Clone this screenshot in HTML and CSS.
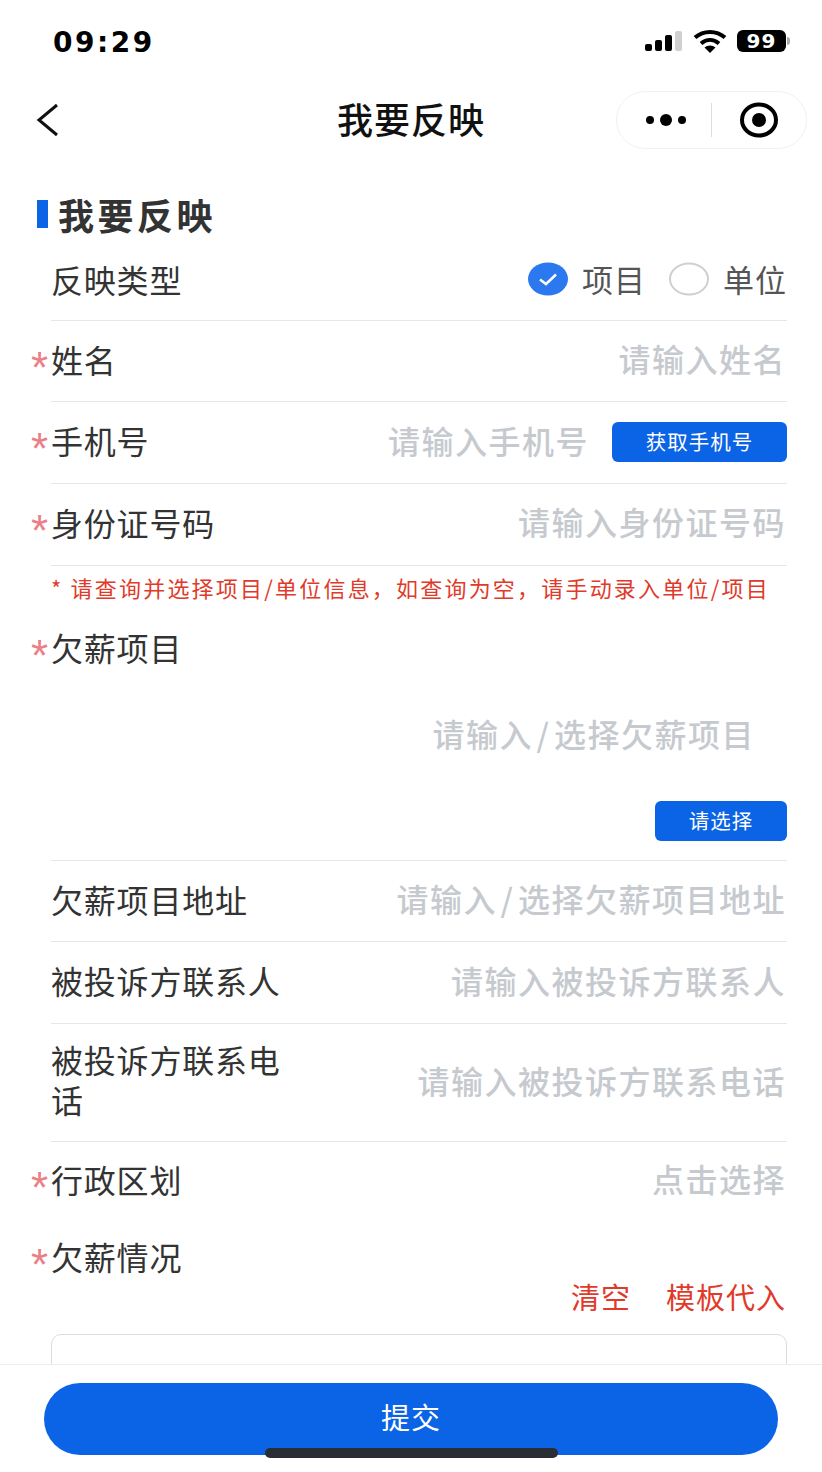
FILE: index.html

```html
<!DOCTYPE html>
<html lang="zh">
<head>
  <meta charset="utf-8">
  <title>我要反映</title>
  <link rel="stylesheet" href="styles.css">
</head>
<body>
<div class="page">
  <div class="status-bar">
    <span class="time">09:29</span>
    <div class="status-icons">
      <svg class="signal" width="38" height="20" viewBox="0 0 38 20">
        <rect x="0" y="13" width="7" height="7" rx="2" fill="#000"/>
        <rect x="10" y="9" width="7" height="11" rx="2" fill="#000"/>
        <rect x="20" y="4" width="7" height="16" rx="2" fill="#000"/>
        <rect x="30" y="0" width="7" height="20" rx="2" fill="#d0d0d0"/>
      </svg>
      <svg class="wifi" width="34" height="24" viewBox="0 0 34 24">
        <path d="M2 8.500C10.500 1 23.500 1 32 8.500" fill="none" stroke="#000" stroke-width="4"/>
        <path d="M8 14.500C13.500 9.800 20.500 9.800 26 14.500" fill="none" stroke="#000" stroke-width="4"/>
        <path d="M17 24L11.500 18.500C14.500 15.800 19.500 15.800 22.500 18.500Z" fill="#000"/>
      </svg>
      <div class="battery"><span>99</span></div>
      <span class="battery-nub"></span>
    </div>
  </div>

  <div class="nav-bar">
    <svg class="back" width="24" height="34" viewBox="0 0 24 34">
      <path d="M21 2L3 17L21 32" fill="none" stroke="#111" stroke-width="3"/>
    </svg>
    <div class="nav-title">我要反映</div>
    <div class="capsule">
      <svg width="44" height="16" viewBox="0 0 44 16">
        <circle cx="5" cy="8" r="4" fill="#000"/>
        <circle cx="21" cy="8" r="6" fill="#000"/>
        <circle cx="37" cy="8" r="4" fill="#000"/>
      </svg>
      <span class="capsule-line"></span>
      <svg class="capsule-ring" width="40" height="36" viewBox="0 0 40 36">
        <ellipse cx="20" cy="18" rx="17" ry="15.500" fill="none" stroke="#000" stroke-width="4"/>
        <circle cx="20" cy="18" r="7" fill="#000"/>
      </svg>
    </div>
  </div>

  <h2 class="section-title">我要反映</h2>

  <div class="form">
    <div class="row row-type">
      <label class="label">反映类型</label>
      <div class="radios">
        <svg class="radio" width="40" height="34" viewBox="0 0 40 34">
          <ellipse cx="20" cy="17" rx="20" ry="16.500" fill="#2b78ef"/>
          <path d="M12 17.500L18 22L28 12.500" fill="none" stroke="#fff" stroke-width="2.500"/>
        </svg>
        <span class="radio-text">项目</span>
        <svg class="radio radio-off" width="40" height="34" viewBox="0 0 40 34">
          <ellipse cx="20" cy="17" rx="19" ry="15.500" fill="#fff" stroke="#cfcfcf" stroke-width="2"/>
        </svg>
        <span class="radio-text">单位</span>
      </div>
    </div>

    <div class="row">
      <label class="label"><i class="star">*</i>姓名</label>
      <span class="placeholder">请输入姓名</span>
    </div>

    <div class="row row-phone">
      <label class="label"><i class="star">*</i>手机号</label>
      <span class="placeholder phone-input">请输入手机号</span>
      <button class="btn btn-phone">获取手机号</button>
    </div>

    <div class="row">
      <label class="label"><i class="star">*</i>身份证号码</label>
      <span class="placeholder">请输入身份证号码</span>
    </div>

    <p class="note">* 请查询并选择项目/单位信息，如查询为空，请手动录入单位/项目</p>

    <div class="project">
      <label class="label"><i class="star">*</i>欠薪项目</label>
      <div class="project-input"><span class="placeholder">请输入&#8202;/&#8202;选择欠薪项目</span></div>
      <div class="project-action"><button class="btn btn-select">请选择</button></div>
    </div>

    <div class="row">
      <label class="label">欠薪项目地址</label>
      <span class="placeholder">请输入&#8202;/&#8202;选择欠薪项目地址</span>
    </div>

    <div class="row">
      <label class="label">被投诉方联系人</label>
      <span class="placeholder">请输入被投诉方联系人</span>
    </div>

    <div class="row row-tall">
      <label class="label label-wrap">被投诉方联系电话</label>
      <span class="placeholder">请输入被投诉方联系电话</span>
    </div>

    <div class="row row-plain">
      <label class="label"><i class="star">*</i>行政区划</label>
      <span class="placeholder">点击选择</span>
    </div>

    <div class="situation">
      <label class="label"><i class="star">*</i>欠薪情况</label>
      <div class="links"><a>清空</a><a>模板代入</a></div>
      <div class="textbox"></div>
    </div>
  </div>

  <div class="footer">
    <button class="submit">提交</button>
  </div>
  <div class="home-bar"></div>
</div>
</body>
</html>
```

FILE: styles.css

```css
* { box-sizing: border-box; }
html, body { margin: 0; padding: 0; }
body { font-family: "Noto Sans CJK SC", "Noto Sans", sans-serif; background: #fff; color: #333; }
.page { position: relative; width: 822px; height: 1472px; overflow: hidden; background: #fff; }

.status-bar { height: 81px; display: flex; justify-content: space-between; align-items: center; padding: 0 32px 0 53px; }
.time { margin-top: 3px; font-family: "DejaVu Sans", sans-serif; font-weight: 700; font-size: 28px; letter-spacing: 2.500px; color: #000; }
.status-icons { display: flex; align-items: center; }
.signal { margin-right: 10px; }
.wifi { margin-right: 10px; }
.battery { width: 49px; height: 22px; background: #000; border-radius: 6px; display: flex; align-items: center; justify-content: center; }
.battery span { font-family: "DejaVu Sans", sans-serif; font-weight: 700; font-size: 20px; color: #fff; letter-spacing: 1px; }
.battery-nub { width: 3px; height: 8px; margin-left: 1px; background: #aaa; border-radius: 0 3px 3px 0; }

.nav-bar { height: 78px; display: grid; grid-template-columns: 1fr auto 1fr; align-items: center; padding: 0 15px; }
.back { margin-left: 21px; }
.nav-title { padding-bottom: 4px; font-size: 36px; font-weight: 500; letter-spacing: 1px; color: #111; }
.capsule { justify-self: end; width: 191px; height: 58px; border: 1px solid #f1f1f1; border-radius: 29px; display: flex; align-items: center; padding-left: 28px; }
.capsule-line { width: 1px; height: 34px; margin-left: 22px; background: #ddd; }
.capsule-ring { margin-left: 27px; }

.section-title { margin: 41px 0 0 37px; display: flex; align-items: center; font-size: 36px; font-weight: 700; letter-spacing: 3.500px; color: #333; border-left: 11px solid #0b63e5; padding-left: 10px; height: 28px; }

.form { padding: 0 35px 0 51px; margin-top: 11px; }
.row { height: 81.700px; display: flex; align-items: center; justify-content: space-between; border-bottom: 1px solid #e6e6e6; }
.row-tall { height: 118px; }
.row-plain { border-bottom: none; height: 78px; }
.label { display: block; padding-bottom: 5px; font-size: 32px; line-height: 40px; letter-spacing: .800px; color: #333; white-space: nowrap; }
.row-type .label { padding-bottom: 0; }
.label-wrap { width: 240px; padding-bottom: 7px; white-space: normal; }
.star { display: inline-block; width: 20px; margin-left: -20px; color: #ea7f88; font-family: "Liberation Sans", sans-serif; font-style: normal; font-size: 44px; line-height: 0; vertical-align: -10px; }
.placeholder { padding: 0 1px 6px 0; font-size: 32px; line-height: 40px; font-weight: 500; letter-spacing: 1.500px; color: #c6cacf; white-space: nowrap; }

.radios { display: flex; align-items: center; }
.radio-text { padding-bottom: 2px; font-size: 31px; letter-spacing: 1px; color: #555; margin-left: 14px; }
.radio-off { margin-left: 23px; }

.phone-input { margin-left: auto; margin-right: 22px; }
.btn { border: none; background: #0b63e5; color: #fff; font-family: inherit; border-radius: 6px; padding: 0 0 3px; }
.btn-phone { width: 175px; height: 40px; margin-bottom: 1px; font-size: 20.500px; letter-spacing: 1px; }
.btn-select { width: 132px; height: 40px; padding-bottom: 1px; font-size: 20.500px; letter-spacing: 1px; }

.note { margin: 0; height: 46px; line-height: 42px; font-size: 22px; letter-spacing: 2.200px; color: #e03a2a; white-space: nowrap; }

.project { height: 249px; padding-top: 15px; border-bottom: 1px solid #e6e6e6; }
.project-input { text-align: right; padding-right: 31px; margin-top: 41px; line-height: 46px; }
.project-action { display: flex; justify-content: flex-end; margin-top: 38px; }

.situation { position: relative; }
.situation .label { padding-top: 16px; }
.links { display: flex; justify-content: flex-end; gap: 35px; margin-top: -5px; padding-right: 1px; font-size: 29px; line-height: 40px; letter-spacing: 1px; color: #e03a2a; }
.textbox { height: 120px; margin-top: 18px; border: 1px solid #dcdcdc; border-radius: 10px; background: #fff; }

.footer { position: absolute; left: 0; right: 0; bottom: 0; height: 108px; background: #fff; border-top: 1px solid #ececec; padding: 18px 44px 0; }
.submit { display: block; width: 734px; height: 72px; padding: 0 0 6px; border: none; border-radius: 36px; background: #0b63e5; color: #fff; font-family: inherit; font-size: 29px; letter-spacing: 1px; }
.home-bar { position: absolute; left: 265px; top: 1448px; width: 293px; height: 10px; border-radius: 5px; background: #2a2d34; }
```
